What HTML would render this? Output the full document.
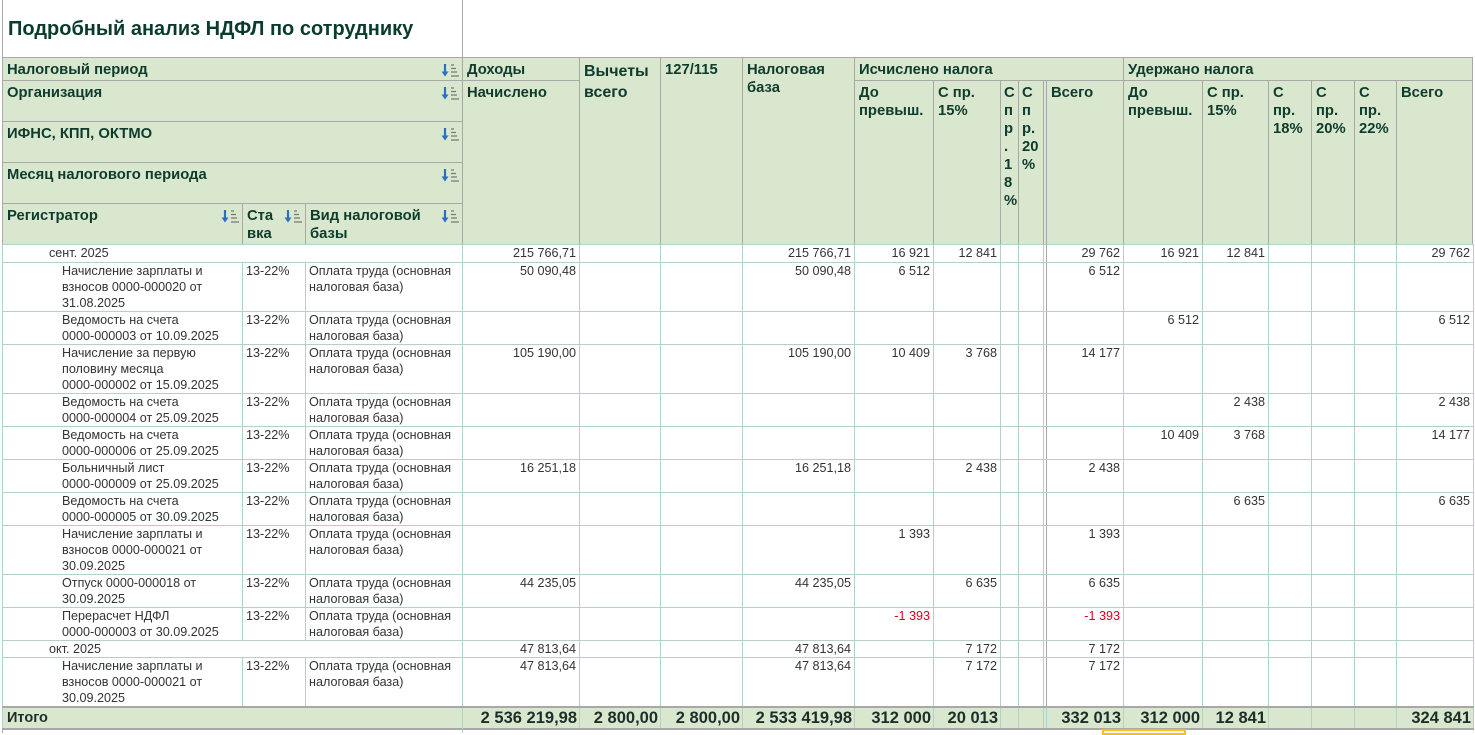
<!DOCTYPE html>
<html><head><meta charset="utf-8"><style>
*{margin:0;padding:0}
body{width:1475px;height:733px;background:#fff;position:relative;overflow:hidden;font-family:"Liberation Sans",sans-serif;}
.t{position:absolute;left:8px;top:18px;font-size:20px;font-weight:bold;color:#0b3b2e;}
.h{position:absolute;box-sizing:border-box;border-right:1px solid #a8a8a8;border-bottom:1px solid #a8a8a8;background:#d9e7cf;padding:3px 4px 1px;font-weight:bold;font-size:14.8px;line-height:18px;color:#0f3b2c;overflow:hidden}
.s{position:absolute;right:2px;top:4px;width:20px;height:16px}
table{position:absolute;left:2px;top:244px;border-collapse:collapse;table-layout:fixed;width:1471px;font-size:12.6px;line-height:16px;color:#333}
td{border:1px solid #b3d2c6;padding:0 3px;vertical-align:top;overflow:hidden;white-space:normal}
td.r{text-align:right}
td.g{padding-left:46px}
td.i{padding-left:59px}
.n{white-space:nowrap}
.red{color:#e0001b}
tr.tot td{background:#d9e7cf;font-weight:bold;font-size:16.5px;color:#1f2d28;border-color:#b3d2c6;border-top:2px solid #a8a8a8;border-bottom:2px solid #a8a8a8;vertical-align:middle;line-height:18px;white-space:nowrap;padding:0 2px}
td.dl{border-left:1px solid #a8a8a8;border-right:1px solid #a8a8a8;padding:0}
</style></head><body>
<div style="position:absolute;left:2px;top:0;width:1px;height:733px;background:#a8a8a8"></div>
<div style="position:absolute;left:462px;top:0;width:1px;height:58px;background:#a8a8a8"></div>
<div style="position:absolute;left:2px;top:57px;width:1471px;height:1px;background:#a8a8a8"></div>
<div class="t">Подробный анализ НДФЛ по сотруднику</div>

<svg width="0" height="0" style="position:absolute"><defs><g id="si"><path d="M5 2v10" stroke="#2b6fc0" stroke-width="2.2"/><path d="M1.5 9.5l3.5 5 3.5-5z" fill="#2b6fc0"/><path d="M11 3h3M11 6.5h5M11 10h6M11 14h8" stroke="#777" stroke-width="1.3"/></g></defs></svg>

<div class="h" style="left:3px;top:58px;width:460px;height:23px">Налоговый период<svg class="s"><use href="#si"/></svg></div>
<div class="h" style="left:3px;top:81px;width:460px;height:41px">Организация<svg class="s"><use href="#si"/></svg></div>
<div class="h" style="left:3px;top:122px;width:460px;height:41px">ИФНС, КПП, ОКТМО<svg class="s"><use href="#si"/></svg></div>
<div class="h" style="left:3px;top:163px;width:460px;height:41px">Месяц налогового периода<svg class="s"><use href="#si"/></svg></div>
<div class="h" style="left:3px;top:204px;width:240px;height:41px">Регистратор<svg class="s"><use href="#si"/></svg></div>
<div class="h" style="left:243px;top:204px;width:63px;height:41px">Ста<br>вка<svg class="s"><use href="#si"/></svg></div>
<div class="h" style="left:306px;top:204px;width:157px;height:41px">Вид налоговой<br>базы<svg class="s"><use href="#si"/></svg></div>

<div class="h" style="left:463px;top:58px;width:117px;height:23px">Доходы</div>
<div class="h" style="left:463px;top:81px;width:117px;height:164px">Начислено</div>
<div class="h" style="left:580px;top:58px;width:81px;height:187px;font-size:16px;line-height:21px;padding-top:3px">Вычеты<br>всего</div>
<div class="h" style="left:661px;top:58px;width:82px;height:187px">127/115</div>
<div class="h" style="left:743px;top:58px;width:112px;height:187px">Налоговая<br>база</div>
<div class="h" style="left:855px;top:58px;width:269px;height:23px">Исчислено налога</div>
<div class="h" style="left:855px;top:81px;width:79px;height:164px">До<br>превыш.</div>
<div class="h" style="left:934px;top:81px;width:67px;height:164px">С пр.<br>15%</div>
<div class="h" style="left:1001px;top:81px;width:18px;height:164px;padding:3px 3px">С п р . 1 8 %</div>
<div class="h" style="left:1019px;top:81px;width:25px;height:164px;padding:3px 3px">С п р. 20 %</div>
<div class="h" style="left:1044px;top:81px;width:3px;height:164px;padding:0"></div>
<div class="h" style="left:1047px;top:81px;width:77px;height:164px">Всего</div>
<div class="h" style="left:1124px;top:58px;width:349px;height:23px">Удержано налога</div>
<div class="h" style="left:1124px;top:81px;width:79px;height:164px">До<br>превыш.</div>
<div class="h" style="left:1203px;top:81px;width:66px;height:164px">С пр.<br>15%</div>
<div class="h" style="left:1269px;top:81px;width:43px;height:164px">С<br>пр.<br>18%</div>
<div class="h" style="left:1312px;top:81px;width:43px;height:164px">С<br>пр.<br>20%</div>
<div class="h" style="left:1355px;top:81px;width:42px;height:164px">С<br>пр.<br>22%</div>
<div class="h" style="left:1397px;top:81px;width:76px;height:164px">Всего</div>

<table>
<colgroup><col style="width:240px"><col style="width:63px"><col style="width:157px"><col style="width:117px"><col style="width:81px"><col style="width:82px"><col style="width:112px"><col style="width:79px"><col style="width:67px"><col style="width:18px"><col style="width:25px"><col style="width:3px"><col style="width:77px"><col style="width:79px"><col style="width:66px"><col style="width:43px"><col style="width:43px"><col style="width:42px"><col style="width:77px"></colgroup>
<tr style="height:18px"><td colspan="3" class="g">сент. 2025</td><td class="r">215 766,71</td><td></td><td></td><td class="r">215 766,71</td><td class="r">16 921</td><td class="r">12 841</td><td></td><td></td><td class="dl"></td><td class="r">29 762</td><td class="r">16 921</td><td class="r">12 841</td><td></td><td></td><td></td><td class="r">29 762</td></tr>
<tr style="height:49px"><td class="i">Начисление зарплаты и взносов <span class="n">0000-000020</span> от 31.08.2025</td><td>13-22%</td><td>Оплата труда (основная налоговая база)</td><td class="r">50 090,48</td><td></td><td></td><td class="r">50 090,48</td><td class="r">6 512</td><td></td><td></td><td></td><td class="dl"></td><td class="r">6 512</td><td></td><td></td><td></td><td></td><td></td><td></td></tr>
<tr style="height:33px"><td class="i">Ведомость на счета <span class="n">0000-000003</span> от 10.09.2025</td><td>13-22%</td><td>Оплата труда (основная налоговая база)</td><td></td><td></td><td></td><td></td><td></td><td></td><td></td><td></td><td class="dl"></td><td></td><td class="r">6 512</td><td></td><td></td><td></td><td></td><td class="r">6 512</td></tr>
<tr style="height:49px"><td class="i">Начисление за первую половину месяца <span class="n">0000-000002</span> от 15.09.2025</td><td>13-22%</td><td>Оплата труда (основная налоговая база)</td><td class="r">105 190,00</td><td></td><td></td><td class="r">105 190,00</td><td class="r">10 409</td><td class="r">3 768</td><td></td><td></td><td class="dl"></td><td class="r">14 177</td><td></td><td></td><td></td><td></td><td></td><td></td></tr>
<tr style="height:33px"><td class="i">Ведомость на счета <span class="n">0000-000004</span> от 25.09.2025</td><td>13-22%</td><td>Оплата труда (основная налоговая база)</td><td></td><td></td><td></td><td></td><td></td><td></td><td></td><td></td><td class="dl"></td><td></td><td></td><td class="r">2 438</td><td></td><td></td><td></td><td class="r">2 438</td></tr>
<tr style="height:33px"><td class="i">Ведомость на счета <span class="n">0000-000006</span> от 25.09.2025</td><td>13-22%</td><td>Оплата труда (основная налоговая база)</td><td></td><td></td><td></td><td></td><td></td><td></td><td></td><td></td><td class="dl"></td><td></td><td class="r">10 409</td><td class="r">3 768</td><td></td><td></td><td></td><td class="r">14 177</td></tr>
<tr style="height:33px"><td class="i">Больничный лист <span class="n">0000-000009</span> от 25.09.2025</td><td>13-22%</td><td>Оплата труда (основная налоговая база)</td><td class="r">16 251,18</td><td></td><td></td><td class="r">16 251,18</td><td></td><td class="r">2 438</td><td></td><td></td><td class="dl"></td><td class="r">2 438</td><td></td><td></td><td></td><td></td><td></td><td></td></tr>
<tr style="height:33px"><td class="i">Ведомость на счета <span class="n">0000-000005</span> от 30.09.2025</td><td>13-22%</td><td>Оплата труда (основная налоговая база)</td><td></td><td></td><td></td><td></td><td></td><td></td><td></td><td></td><td class="dl"></td><td></td><td></td><td class="r">6 635</td><td></td><td></td><td></td><td class="r">6 635</td></tr>
<tr style="height:49px"><td class="i">Начисление зарплаты и взносов <span class="n">0000-000021</span> от 30.09.2025</td><td>13-22%</td><td>Оплата труда (основная налоговая база)</td><td></td><td></td><td></td><td></td><td class="r">1 393</td><td></td><td></td><td></td><td class="dl"></td><td class="r">1 393</td><td></td><td></td><td></td><td></td><td></td><td></td></tr>
<tr style="height:33px"><td class="i">Отпуск <span class="n">0000-000018</span> от 30.09.2025</td><td>13-22%</td><td>Оплата труда (основная налоговая база)</td><td class="r">44 235,05</td><td></td><td></td><td class="r">44 235,05</td><td></td><td class="r">6 635</td><td></td><td></td><td class="dl"></td><td class="r">6 635</td><td></td><td></td><td></td><td></td><td></td><td></td></tr>
<tr style="height:33px"><td class="i">Перерасчет НДФЛ <span class="n">0000-000003</span> от 30.09.2025</td><td>13-22%</td><td>Оплата труда (основная налоговая база)</td><td></td><td></td><td></td><td></td><td class="r red">-1 393</td><td></td><td></td><td></td><td class="dl"></td><td class="r red">-1 393</td><td></td><td></td><td></td><td></td><td></td><td></td></tr>
<tr style="height:17px"><td colspan="3" class="g">окт. 2025</td><td class="r">47 813,64</td><td></td><td></td><td class="r">47 813,64</td><td></td><td class="r">7 172</td><td></td><td></td><td class="dl"></td><td class="r">7 172</td><td></td><td></td><td></td><td></td><td></td><td></td></tr>
<tr style="height:49px"><td class="i">Начисление зарплаты и взносов <span class="n">0000-000021</span> от 30.09.2025</td><td>13-22%</td><td>Оплата труда (основная налоговая база)</td><td class="r">47 813,64</td><td></td><td></td><td class="r">47 813,64</td><td></td><td class="r">7 172</td><td></td><td></td><td class="dl"></td><td class="r">7 172</td><td></td><td></td><td></td><td></td><td></td><td></td></tr>
<tr class="tot" style="height:22px"><td colspan="3" style="font-size:14.5px;padding-left:4px">Итого</td><td class="r">2 536 219,98</td><td class="r">2 800,00</td><td class="r">2 800,00</td><td class="r">2 533 419,98</td><td class="r">312 000</td><td class="r">20 013</td><td></td><td></td><td class="dl"></td><td class="r">332 013</td><td class="r">312 000</td><td class="r">12 841</td><td></td><td></td><td></td><td class="r">324 841</td></tr>
</table>
<div style="position:absolute;left:462px;top:728px;width:1px;height:5px;background:#b3d2c6"></div>
<div style="position:absolute;left:1102px;top:729px;width:84px;height:6px;border:2px solid #f2c21b;box-sizing:border-box;background:#f4f4f4"></div>
</body></html>
